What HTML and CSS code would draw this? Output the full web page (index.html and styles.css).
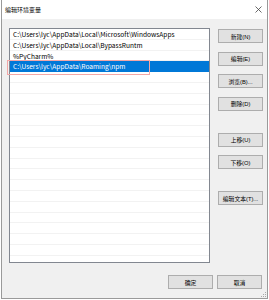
FILE: index.html
```html
<!DOCTYPE html>
<html lang="zh-CN">
<head>
  <meta charset="UTF-8">
  <title>编辑环境变量</title>
  <link rel="stylesheet" href="styles.css">
</head>
<body>

  <div class="dialog">
    <div class="titlebar">
      <span class="title">编辑环境变量</span>
      <svg class="close" width="7" height="7" viewBox="0 0 7 7">
        <path d="M0.5 0.5 L6.5 6.5 M6.5 0.5 L0.5 6.5" stroke="#444" stroke-width="0.8" fill="none"/>
      </svg>
    </div>

    <div class="content">
      <div class="list">
        <div class="row">C:\Users\lyc\AppData\Local\Microsoft\WindowsApps</div>
        <div class="row">C:\Users\lyc\AppData\Local\BypassRuntm</div>
        <div class="row">%PyCharm%</div>
        <div class="row selected">C:\Users\lyc\AppData\Roaming\npm</div>
        <div class="row"></div>
        <div class="row"></div>
        <div class="row"></div>
        <div class="row"></div>
        <div class="row"></div>
        <div class="row"></div>
        <div class="row"></div>
        <div class="row"></div>
        <div class="row"></div>
        <div class="row"></div>
        <div class="row"></div>
        <div class="row"></div>
        <div class="row"></div>
        <div class="row"></div>
        <div class="row"></div>
        <div class="row"></div>
        <div class="row"></div>
      </div>

      <div class="side">
        <button class="btn first">新建(N)</button>
        <button class="btn">编辑(E)</button>
        <button class="btn">浏览(B)...</button>
        <button class="btn">删除(D)</button>
        <button class="btn group">上移(U)</button>
        <button class="btn">下移(O)</button>
        <button class="btn group">编辑文本(T)...</button>
      </div>
    </div>

    <div class="footer">
      <button class="btn">确定</button>
      <button class="btn">取消</button>
    </div>

    <!-- красная рамка поверх выбранной строки -->
    <div class="mark"></div>

    <svg class="grip" width="5" height="5" viewBox="0 0 5 5">
      <rect x="4" y="0" width="1" height="1" fill="#aaa"/>
      <rect x="2" y="2" width="1" height="1" fill="#aaa"/>
      <rect x="4" y="2" width="1" height="1" fill="#aaa"/>
      <rect x="0" y="4" width="1" height="1" fill="#aaa"/>
      <rect x="2" y="4" width="1" height="1" fill="#aaa"/>
      <rect x="4" y="4" width="1" height="1" fill="#aaa"/>
    </svg>
  </div>

</body>
</html>
```

FILE: styles.css
```css
body {
  margin: 0;
  padding: 0;
  background-color: #FFF;
  font-family: "Liberation Sans", "Noto Sans CJK SC", sans-serif;
  color: #000;
}

.dialog {
  position: relative;
  box-sizing: border-box;
  width: 267px;
  height: 299px;
  margin-left: 1px;
  background-color: #F0F0F0;
  border: 1px solid #9A9A9A;
  border-top: none;
}

.titlebar {
  height: 19px;
  background-color: #FFF;
  display: flex;
  align-items: center;
  justify-content: space-between;
  padding: 0 4px 0 3px;
}

.title {
  font-family: "Noto Sans CJK SC", sans-serif;
  font-size: 6px;
  color: #000;
}

.close {
  margin-right: 1px;
}

.content {
  display: flex;
  gap: 8px;
  padding: 9px 0 0 7px;
}

.list {
  box-sizing: border-box;
  width: 201px;
  height: 235px;
  background-color: #FFF;
  border: 1px solid #828790;
  overflow: hidden;
}

.row {
  box-sizing: border-box;
  height: 10.8px;
  line-height: 10px;
  padding-left: 3px;
  font-family: "Liberation Sans Narrow", "Noto Sans CJK SC", sans-serif;
  font-size: 6.6px;
  white-space: nowrap;
  border-bottom: 1px solid #F2F2F2;
}

.row.selected {
  background-color: #0078D7;
  color: #FFF;
  border-bottom-color: #0078D7;
}

.side {
  display: flex;
  flex-direction: column;
}

.btn {
  box-sizing: border-box;
  width: 45px;
  height: 14px;
  margin: 0;
  padding: 0;
  font-family: "Liberation Sans", "Noto Sans CJK SC", sans-serif;
  font-size: 5.8px;
  color: #000;
  background-color: #E1E1E1;
  border: 1px solid #ADADAD;
  border-radius: 0;
}

.side .btn {
  margin-top: 8.5px;
}

.side .btn.first {
  margin-top: 1px;
}

.side .btn.group {
  margin-top: 22px;
}

.footer {
  display: flex;
  justify-content: flex-end;
  gap: 4px;
  padding: 12px 5px 0 0;
}

.mark {
  position: absolute;
  left: 5px;
  top: 60px;
  width: 143px;
  height: 15px;
  box-sizing: border-box;
  border: 1px solid #F2A7A7;
}

.grip {
  position: absolute;
  right: 1px;
  bottom: 1px;
}
```
